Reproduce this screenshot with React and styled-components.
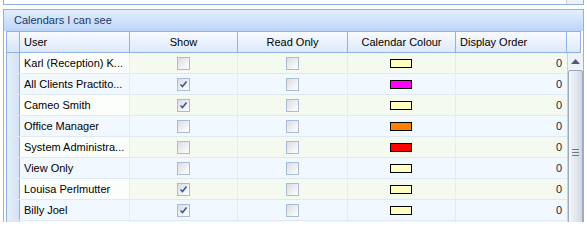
import React from 'react'
import styled, { createGlobalStyle, css } from 'styled-components'

const GlobalStyle = createGlobalStyle`
  html, body { margin: 0; padding: 0; background: #ffffff; }
  body {
    font-family: "Liberation Sans", Arial, sans-serif;
    font-size: 11px;
    color: #000;
  }
`

const COLS = '13px 110px 108px 110px 108px 111px 16px'

const rows = [
  { user: 'Karl (Reception) K...', show: false, readOnly: false, colour: '#ffffc0', order: 0 },
  { user: 'All Clients Practito...', show: true, readOnly: false, colour: '#ff00ff', order: 0 },
  { user: 'Cameo Smith', show: true, readOnly: false, colour: '#ffffc0', order: 0 },
  { user: 'Office Manager', show: false, readOnly: false, colour: '#ff8000', order: 0 },
  { user: 'System Administra...', show: false, readOnly: false, colour: '#ff0000', order: 0 },
  { user: 'View Only', show: false, readOnly: false, colour: '#ffffc0', order: 0 },
  { user: 'Louisa Perlmutter', show: true, readOnly: false, colour: '#ffffc0', order: 0 },
  { user: 'Billy Joel', show: true, readOnly: false, colour: '#ffffc0', order: 0 },
  { user: '', show: false, readOnly: false, colour: null, order: null },
]

function App() {
  return (
    <>
      <GlobalStyle />
      <Page>
        <TopPanel>
          <TopTrack />
        </TopPanel>
        <Group>
          <GroupHeader>Calendars I can see</GroupHeader>
          <GridWrap>
            <Grid>
              <HeadRow>
                <Indicator $head />
                <HeadCell>User</HeadCell>
                <HeadCell $center>Show</HeadCell>
                <HeadCell $center>Read Only</HeadCell>
                <HeadCell $center>Calendar Colour</HeadCell>
                <HeadCell>Display Order</HeadCell>
                <HeadCell $last />
              </HeadRow>
              <Body>
                <Rows>
                  {rows.map((r, i) => (
                    <Row key={i} $odd={i % 2 === 0}>
                      <Indicator />
                      <Cell $user $odd={i % 2 === 0}>{r.user}</Cell>
                      <Cell $center>{r.colour && <Check checked={r.show} />}</Cell>
                      <Cell $center>{r.colour && <Check checked={r.readOnly} />}</Cell>
                      <Cell $center>{r.colour && <Swatch $c={r.colour} />}</Cell>
                      <Cell $right>{r.order}</Cell>
                    </Row>
                  ))}
                </Rows>
                <ScrollBar>
                  <ArrowBtn>
                    <svg width="9" height="5" viewBox="0 0 9 5">
                      <path d="M0 5 L4.5 0 L9 5 Z" fill="#4a5c78" />
                    </svg>
                  </ArrowBtn>
                  <Thumb>
                    <Grip />
                  </Thumb>
                </ScrollBar>
              </Body>
            </Grid>
          </GridWrap>
        </Group>
      </Page>
    </>
  )
}

function Check({ checked }) {
  return (
    <Box>
      {checked && (
        <svg width="9" height="9" viewBox="0 0 9 9">
          <path d="M1.5 4.5 L3.5 6.5 L7.5 1.5" stroke="#3a5a98" strokeWidth="1.6" fill="none" />
        </svg>
      )}
    </Box>
  )
}

export default App

const Page = styled.div`
  width: 587px;
  height: 222px;
  overflow: hidden;
  position: relative;
`

const TopPanel = styled.div`
  height: 4px;
  margin: 0 3px;
  border: 1px solid #8db2e3;
  border-top: none;
  display: flex;
  justify-content: flex-end;
`

const TopTrack = styled.div`
  width: 16px;
  border-left: 1px solid #c9d3df;
  background: #eef2f7;
`

const Group = styled.div`
  margin: 4px 3px 0 3px;
  border: 1px solid #8db2e3;
  border-bottom: none;
  background: #fff;
`

const GroupHeader = styled.div`
  height: 21px;
  line-height: 21px;
  padding-left: 10px;
  color: #1d3766;
  background: linear-gradient(#e3effe, #cfe2fb 50%, #bcd5f6);
`

const GridWrap = styled.div`
  padding: 0 2px;
`

const Grid = styled.div`
  border: 1px solid #8db2e3;
  border-bottom: none;
`

const HeadRow = styled.div`
  display: grid;
  grid-template-columns: ${COLS};
  height: 20px;
  border-bottom: 1px solid #8db2e3;
  background: linear-gradient(#f9fbff, #e8f0fc 60%, #dce8fa);
`

const Indicator = styled.div`
  border-right: 1px solid #8db2e3;
  background: linear-gradient(90deg, #e6eefa, #d4e2f6);
  ${p => p.$head && css`background: linear-gradient(#f2f7ff, #d6e5f9);`}
`

const HeadCell = styled.div`
  border-right: ${p => (p.$last ? 'none' : '1px solid #8db2e3')};
  padding: 0 4px;
  line-height: 20px;
  color: #000;
  text-align: ${p => (p.$center ? 'center' : 'left')};
  white-space: nowrap;
  overflow: hidden;
`

const Body = styled.div`
  display: flex;
`

const Rows = styled.div`
  flex: 1;
`

const Row = styled.div`
  display: grid;
  grid-template-columns: 13px 110px 108px 110px 108px 111px;
  height: 20px;
  border-bottom: 1px solid #dfe8f5;
  background: ${p => (p.$odd ? '#f5faf0' : '#f2f8ff')};
`

const Cell = styled.div`
  border-right: 1px solid #e2ebf6;
  padding: 0 5px 0 4px;
  display: flex;
  align-items: center;
  white-space: nowrap;
  overflow: hidden;
  justify-content: ${p => (p.$center ? 'center' : p.$right ? 'flex-end' : 'flex-start')};
  ${p => p.$user && p.$odd && css`background: #fcfefc;`}
  ${p => p.$right && css`color: #1a1a40; border-right: none;`}
`

const Box = styled.div`
  width: 11px;
  height: 11px;
  border: 1px solid #a9bbd6;
  background: linear-gradient(135deg, #d9dce2, #f4f5f7 70%, #ffffff);
  display: flex;
  align-items: center;
  justify-content: center;
`

const Swatch = styled.div`
  width: 20px;
  height: 7px;
  border: 1px solid #000;
  background: ${p => p.$c};
`

const ScrollBar = styled.div`
  width: 16px;
  background: #eef2f7;
  border-left: 1px solid #c6d2e1;
  display: flex;
  flex-direction: column;
  align-items: center;
`

const ArrowBtn = styled.div`
  height: 17px;
  width: 100%;
  display: flex;
  align-items: center;
  justify-content: center;
`

const Thumb = styled.div`
  width: 13px;
  flex: 1;
  border: 1px solid #9aa9bd;
  border-radius: 2px 2px 0 0;
  background: linear-gradient(90deg, #f4f6f9, #dfe5ee 60%, #cdd6e3);
  position: relative;
`

const Grip = styled.div`
  position: absolute;
  left: 3px;
  top: 78px;
  width: 7px;
  height: 5px;
  border-top: 1px solid #6d7a8c;
  border-bottom: 1px solid #6d7a8c;
  &::after {
    content: '';
    position: absolute;
    left: 0;
    right: 0;
    top: 2px;
    border-top: 1px solid #6d7a8c;
  }
`
